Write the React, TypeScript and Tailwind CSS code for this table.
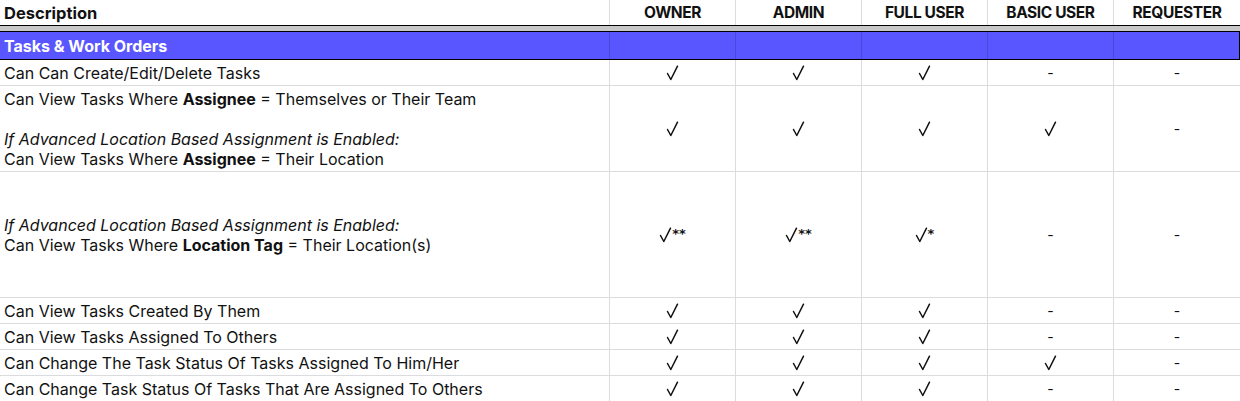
const COLS = ['OWNER', 'ADMIN', 'FULL USER', 'BASIC USER', 'REQUESTER']

type Row = {
  desc: React.ReactNode
  marks: string[]
  h: string
}

const Y = '✓'
const N = '-'

const rows: Row[] = [
  { desc: 'Can Can Create/Edit/Delete Tasks', marks: [Y, Y, Y, N, N], h: 'h-[26px]' },
  {
    desc: (
      <>
        <div>
          Can View Tasks Where <b>Assignee</b> = Themselves or Their Team
        </div>
        <div>&nbsp;</div>
        <div className="italic">If Advanced Location Based Assignment is Enabled:</div>
        <div>
          Can View Tasks Where <b>Assignee</b> = Their Location
        </div>
      </>
    ),
    marks: [Y, Y, Y, Y, N],
    h: 'h-[86px]',
  },
  {
    desc: (
      <>
        <div className="italic">If Advanced Location Based Assignment is Enabled:</div>
        <div>
          Can View Tasks Where <b>Location Tag</b> = Their Location(s)
        </div>
      </>
    ),
    marks: [Y + '**', Y + '**', Y + '*', N, N],
    h: 'h-[126px]',
  },
  { desc: 'Can View Tasks Created By Them', marks: [Y, Y, Y, N, N], h: 'h-[26px]' },
  { desc: 'Can View Tasks Assigned To Others', marks: [Y, Y, Y, N, N], h: 'h-[26px]' },
  { desc: 'Can Change The Task Status Of Tasks Assigned To Him/Her', marks: [Y, Y, Y, Y, N], h: 'h-[26px]' },
  { desc: 'Can Change Task Status Of Tasks That Are Assigned To Others', marks: [Y, Y, Y, N, N], h: 'h-[26px]' },
]

const grid = 'grid grid-cols-[610px_repeat(5,126px)]'

function Check() {
  return (
    <svg width="13" height="16" viewBox="0 0 13 16" fill="none" stroke="#111" strokeWidth="1.5" strokeLinecap="round" strokeLinejoin="round">
      <path d="M1.5 8.5 L4.8 14.5 L11.5 1.2" />
    </svg>
  )
}

function Mark({ v }: { v: string }) {
  if (v === N) return <span className="text-[14px]">-</span>
  const stars = v.slice(1)
  return (
    <span className="flex items-start">
      <Check />
      {stars && <span className="font-['DejaVu_Sans',sans-serif] text-[13px] leading-[14px] font-bold">{stars}</span>}
    </span>
  )
}

export default function App() {
  return (
    <div className="w-[1240px] h-[401px] overflow-hidden bg-white text-[#111] font-['Inter','Liberation_Sans',sans-serif] text-[16px] leading-5">
      {/* header */}
      <div className={`${grid} h-[26px] border-b border-black`}>
        <div className="border-r border-[#dadce0] px-[4px] font-bold text-[16.5px] flex items-center pt-px">Description</div>
        {COLS.map((c, i) => (
          <div
            key={c}
            className={`flex items-center justify-center font-bold text-[15.5px] tracking-[-0.4px] pt-px ${i < 4 ? 'border-r border-[#dadce0]' : ''}`}
          >
            {c}
          </div>
        ))}
      </div>
      <div className="h-[5px] bg-[#c8c8c8]" />

      {/* section row */}
      <div className={`${grid} h-[29px] bg-[#5956ff] border-y border-black`}>
        <div className="border-r border-[#4a48d6] px-[4px] font-bold text-white flex items-center">
          Tasks &amp; Work Orders
        </div>
        {COLS.map((c, i) => (
          <div key={c} className={i < 4 ? 'border-r border-[#4a48d6]' : 'border-r border-black'} />
        ))}
      </div>

      {rows.map((r, ri) => (
        <div key={ri} className={`${grid} ${r.h} border-b border-[#dadce0]`}>
          <div className="border-r border-[#dadce0] px-[4px] flex flex-col justify-center">{r.desc}</div>
          {r.marks.map((m, i) => (
            <div key={i} className={`flex items-center justify-center ${i < 4 ? 'border-r border-[#dadce0]' : ''}`}>
              <Mark v={m} />
            </div>
          ))}
        </div>
      ))}
    </div>
  )
}
